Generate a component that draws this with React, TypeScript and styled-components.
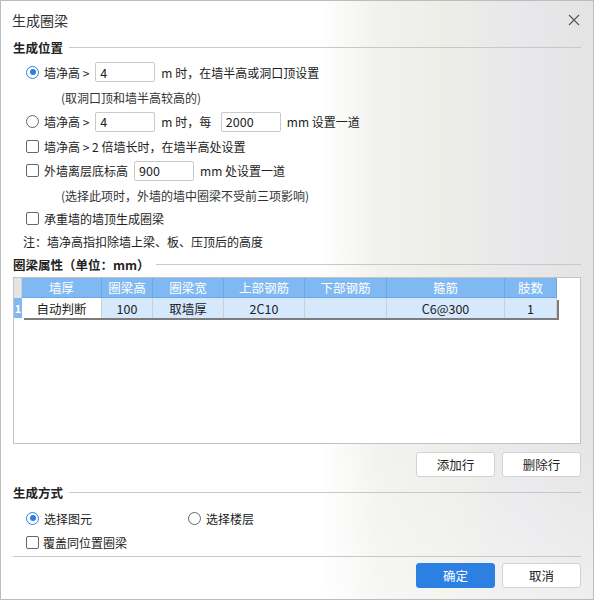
import styled, { createGlobalStyle } from 'styled-components';

const GlobalStyle = createGlobalStyle`
  html, body {
    margin: 0;
    padding: 0;
    background: #ffffff;
  }
  * {
    box-sizing: border-box;
  }
`;

const Dialog = styled.div`
  width: 594px;
  height: 600px;
  border: 1px solid #bdbdbd;
  font-family: 'Noto Sans CJK SC', 'Noto Sans', sans-serif;
  font-size: 12px;
  color: #222;
  background:
    linear-gradient(180deg, rgba(255, 255, 255, 0) 0%, rgba(255, 255, 255, 0) 70%, rgba(255, 255, 255, 0.4) 100%),
    linear-gradient(90deg, #ffffff 0%, #ffffff 54%, #f1f1ee 64%, #ededE8 76%, #e8e7ea 88%, #e4e4e4 100%);
  display: flex;
  flex-direction: column;
`;

const TitleBar = styled.div`
  height: 37px;
  display: flex;
  align-items: center;
  justify-content: space-between;
  padding: 0 12px 0 11px;
`;

const Title = styled.span`
  font-size: 14px;
  color: #333;
`;

const CloseIcon = styled.svg`
  width: 12px;
  height: 12px;
  margin-right: 1px;
`;

const Body = styled.div`
  padding: 0 12px;
  display: flex;
  flex-direction: column;
`;

const SectionHead = styled.div<{ $top?: number }>`
  height: 18px;
  margin-top: ${({ $top }) => $top ?? 0}px;
  display: flex;
  align-items: center;
  gap: 6px;
  font-weight: 700;
  font-size: 12.5px;
  color: #222;
  &::after {
    content: '';
    flex: 1;
    height: 1px;
    background: #c8c8c8;
  }
`;

const Row = styled.div<{ $h: number; $indent?: number }>`
  height: ${({ $h }) => $h}px;
  display: flex;
  align-items: center;
  padding-left: ${({ $indent }) => $indent ?? 13}px;
  white-space: pre;
`;

const Label = styled.span<{ $gap?: number }>`
  margin-left: ${({ $gap }) => $gap ?? 5}px;
  margin-right: 6px;
`;

const Text = styled.span<{ $after?: number }>`
  margin-right: ${({ $after }) => $after ?? 0}px;
`;

const Hint = styled.span`
  color: #333;
`;

const Field = styled.div<{ $w?: number }>`
  width: ${({ $w }) => $w ?? 60}px;
  height: 20px;
  border: 1px solid #c9c9c9;
  border-radius: 2px;
  background: #fff;
  display: flex;
  align-items: center;
  padding-left: 4px;
  font-size: 12.5px;
  color: #222;
  margin-right: 6px;
`;

const Radio = styled.span<{ $on?: boolean }>`
  width: 13px;
  height: 13px;
  border-radius: 50%;
  border: 1px solid ${({ $on }) => ($on ? '#2b7fe0' : '#666')};
  background: #fff;
  display: inline-flex;
  align-items: center;
  justify-content: center;
  flex: none;
  &::after {
    content: '';
    width: 6px;
    height: 6px;
    border-radius: 50%;
    background: ${({ $on }) => ($on ? '#2b7fe0' : 'transparent')};
  }
`;

const Check = styled.span`
  width: 13px;
  height: 13px;
  border-radius: 2px;
  border: 1px solid #666;
  background: #fff;
  flex: none;
`;

const Option = styled.div<{ $w?: number }>`
  display: flex;
  align-items: center;
  width: ${({ $w }) => ($w ? `${$w}px` : 'auto')};
`;

const TableBox = styled.div`
  margin-top: 4px;
  height: 167px;
  border: 1px solid #c4c4c4;
  background: #fff;
`;

const COLS = '8px 80px 51px 71px 81px 82px 118px 52px';

const HeaderGrid = styled.div`
  display: grid;
  grid-template-columns: ${COLS};
  height: 20px;
`;

const Corner = styled.div`
  background: #e4e4e4;
  border-right: 1px solid #d0d0d0;
`;

const HeadCell = styled.div`
  background: #80b9f2;
  border-right: 1px solid #69a7e9;
  border-bottom: 1px solid #69a7e9;
  color: #fff;
  display: flex;
  align-items: center;
  justify-content: center;
  font-size: 12.5px;
`;

const DataRow = styled.div`
  display: flex;
  height: 20px;
`;

const RowHead = styled.div`
  width: 8px;
  background: #80b9f2;
  color: #fff;
  font-weight: 700;
  font-size: 11px;
  display: flex;
  align-items: center;
  justify-content: center;
`;

const DataGrid = styled.div`
  display: grid;
  grid-template-columns: 80px 51px 71px 81px 82px 118px 52px;
  box-shadow: 2px 2px 0 #7c7c7c;
`;

const Cell = styled.div<{ $focus?: boolean }>`
  background: ${({ $focus }) => ($focus ? '#ffffff' : '#d5e8fc')};
  border-right: 1px solid #cfcfcf;
  display: flex;
  align-items: center;
  justify-content: center;
  font-size: 12.5px;
  color: #222;
`;

const ButtonRow = styled.div<{ $top: number }>`
  display: flex;
  justify-content: flex-end;
  gap: 7px;
  margin-top: ${({ $top }) => $top}px;
`;

const Button = styled.button<{ $primary?: boolean }>`
  width: 79px;
  height: 25px;
  border-radius: 3px;
  border: 1px solid ${({ $primary }) => ($primary ? '#2b7fe0' : '#d2d2d2')};
  background: ${({ $primary }) => ($primary ? '#2b80e2' : '#ffffff')};
  color: ${({ $primary }) => ($primary ? '#ffffff' : '#222')};
  font-family: inherit;
  font-size: 12.5px;
  padding: 0;
`;

const Divider = styled.div`
  height: 1px;
  background: #c8c8c8;
  margin-top: 3px;
`;

const columns = ['墙厚', '圈梁高', '圈梁宽', '上部钢筋', '下部钢筋', '箍筋', '肢数'];
const values = ['自动判断', '100', '取墙厚', '2C10', '', 'C6@300', '1'];

export default function App() {
  return (
    <>
      <GlobalStyle />
      <Dialog>
        <TitleBar>
          <Title>生成圈梁</Title>
          <CloseIcon viewBox="0 0 12 12">
            <path d="M1 1 L11 11 M11 1 L1 11" stroke="#555" strokeWidth="1.1" fill="none" />
          </CloseIcon>
        </TitleBar>
        <Body>
          <SectionHead>生成位置</SectionHead>
          <Row $h={26} style={{ marginTop: 3 }}>
            <Radio $on />
            <Label>墙净高 &gt;</Label>
            <Field>4</Field>
            <Text>m 时，在墙半高或洞口顶设置</Text>
          </Row>
          <Row $h={24} $indent={48}>
            <Hint>(取洞口顶和墙半高较高的)</Hint>
          </Row>
          <Row $h={25}>
            <Radio />
            <Label>墙净高 &gt;</Label>
            <Field>4</Field>
            <Text $after={7}>m 时，每 </Text>
            <Field>2000</Field>
            <Text>mm 设置一道</Text>
          </Row>
          <Row $h={24}>
            <Check />
            <Label>墙净高 &gt; 2 倍墙长时，在墙半高处设置</Label>
          </Row>
          <Row $h={25}>
            <Check />
            <Label>外墙离层底标高</Label>
            <Field>900</Field>
            <Text>mm 处设置一道</Text>
          </Row>
          <Row $h={24} $indent={48}>
            <Hint>(选择此项时，外墙的墙中圈梁不受前三项影响)</Hint>
          </Row>
          <Row $h={22}>
            <Check />
            <Label>承重墙的墙顶生成圈梁</Label>
          </Row>
          <Row $h={24} $indent={10}>
            <Text>注：墙净高指扣除墙上梁、板、压顶后的高度</Text>
          </Row>
          <SectionHead $top={2}>圈梁属性（单位：mm）</SectionHead>
          <TableBox>
            <HeaderGrid>
              <Corner />
              {columns.map((c) => (
                <HeadCell key={c}>{c}</HeadCell>
              ))}
            </HeaderGrid>
            <DataRow>
              <RowHead>1</RowHead>
              <DataGrid>
                {values.map((v, i) => (
                  <Cell key={i} $focus={i === 0}>
                    {v}
                  </Cell>
                ))}
              </DataGrid>
            </DataRow>
          </TableBox>
          <ButtonRow $top={8}>
            <Button>添加行</Button>
            <Button>删除行</Button>
          </ButtonRow>
          <SectionHead $top={6}>生成方式</SectionHead>
          <Row $h={26} style={{ marginTop: 4 }}>
            <Option $w={162}>
              <Radio $on />
              <Label>选择图元</Label>
            </Option>
            <Option>
              <Radio />
              <Label>选择楼层</Label>
            </Option>
          </Row>
          <Row $h={22}>
            <Check />
            <Label $gap={4}>覆盖同位置圈梁</Label>
          </Row>
          <Divider />
          <ButtonRow $top={6}>
            <Button $primary>确定</Button>
            <Button>取消</Button>
          </ButtonRow>
        </Body>
      </Dialog>
    </>
  );
}
